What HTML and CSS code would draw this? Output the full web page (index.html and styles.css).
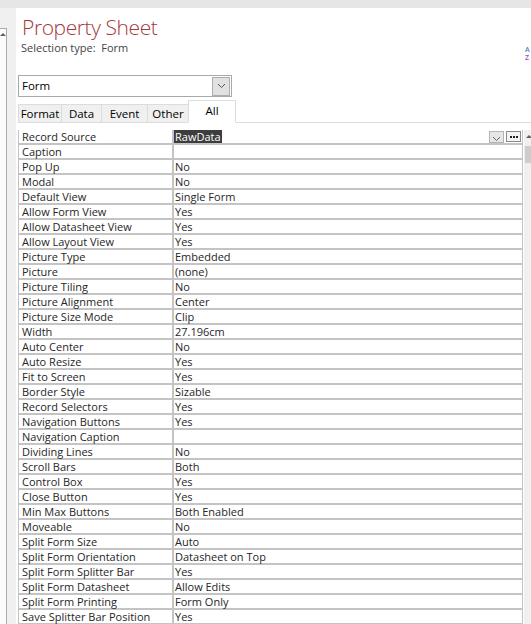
FILE: index.html
```html
<!DOCTYPE html>
<html>
<head>
<meta charset="utf-8">
<link rel="stylesheet" href="styles.css">
</head>
<body>
<div class="topband"></div>
<div class="main">
  <div class="leftstrip">
    <div class="leftbox"><span class="uparrow"></span></div>
  </div>
  <div class="panel">
    <div class="header">
      <div class="titleblock">
        <div class="title">Property Sheet</div>
        <div class="seltype">Selection type:&nbsp;&nbsp;Form</div>
      </div>
      <div class="az"><span class="az-a">A</span><span class="az-z">Z</span></div>
    </div>
    <div class="combo">
      <span class="combo-text">Form</span>
      <span class="combo-btn"><svg width="9" height="6" viewBox="0 0 9 6"><path d="M1 1 L4.5 4.5 L8 1" fill="none" stroke="#555" stroke-width="1"/></svg></span>
    </div>
    <div class="tabs">
      <div class="tab t-format">Format</div>
      <div class="tab t-data">Data</div>
      <div class="tab t-event">Event</div>
      <div class="tab t-other">Other</div>
      <div class="tab t-all active">All</div>
      <div class="tabfill"></div>
    </div>
    <div class="gridwrap">
      <div class="grid">
        <div class="row"><div class="k">Record Source</div><div class="v first"><span class="sel">RawData</span><span class="cbtn"><svg width="9" height="6" viewBox="0 0 9 6"><path d="M1 1 L4.5 4.5 L8 1" fill="none" stroke="#666" stroke-width="1"/></svg></span><span class="dbtn"><i></i><i></i><i></i></span></div></div>
        <div class="row"><div class="k">Caption</div><div class="v"></div></div>
        <div class="row"><div class="k">Pop Up</div><div class="v">No</div></div>
        <div class="row"><div class="k">Modal</div><div class="v">No</div></div>
        <div class="row"><div class="k">Default View</div><div class="v">Single Form</div></div>
        <div class="row"><div class="k">Allow Form View</div><div class="v">Yes</div></div>
        <div class="row"><div class="k">Allow Datasheet View</div><div class="v">Yes</div></div>
        <div class="row"><div class="k">Allow Layout View</div><div class="v">Yes</div></div>
        <div class="row"><div class="k">Picture Type</div><div class="v">Embedded</div></div>
        <div class="row"><div class="k">Picture</div><div class="v">(none)</div></div>
        <div class="row"><div class="k">Picture Tiling</div><div class="v">No</div></div>
        <div class="row"><div class="k">Picture Alignment</div><div class="v">Center</div></div>
        <div class="row"><div class="k">Picture Size Mode</div><div class="v">Clip</div></div>
        <div class="row"><div class="k">Width</div><div class="v">27.196cm</div></div>
        <div class="row"><div class="k">Auto Center</div><div class="v">No</div></div>
        <div class="row"><div class="k">Auto Resize</div><div class="v">Yes</div></div>
        <div class="row"><div class="k">Fit to Screen</div><div class="v">Yes</div></div>
        <div class="row"><div class="k">Border Style</div><div class="v">Sizable</div></div>
        <div class="row"><div class="k">Record Selectors</div><div class="v">Yes</div></div>
        <div class="row"><div class="k">Navigation Buttons</div><div class="v">Yes</div></div>
        <div class="row"><div class="k">Navigation Caption</div><div class="v"></div></div>
        <div class="row"><div class="k">Dividing Lines</div><div class="v">No</div></div>
        <div class="row"><div class="k">Scroll Bars</div><div class="v">Both</div></div>
        <div class="row"><div class="k">Control Box</div><div class="v">Yes</div></div>
        <div class="row"><div class="k">Close Button</div><div class="v">Yes</div></div>
        <div class="row"><div class="k">Min Max Buttons</div><div class="v">Both Enabled</div></div>
        <div class="row"><div class="k">Moveable</div><div class="v">No</div></div>
        <div class="row"><div class="k">Split Form Size</div><div class="v">Auto</div></div>
        <div class="row"><div class="k">Split Form Orientation</div><div class="v">Datasheet on Top</div></div>
        <div class="row"><div class="k">Split Form Splitter Bar</div><div class="v">Yes</div></div>
        <div class="row"><div class="k">Split Form Datasheet</div><div class="v">Allow Edits</div></div>
        <div class="row"><div class="k">Split Form Printing</div><div class="v">Form Only</div></div>
        <div class="row"><div class="k">Save Splitter Bar Position</div><div class="v">Yes</div></div>
      </div>
      <div class="scrollbar">
        <div class="sb-arrow"></div>
        <div class="sb-thumb"></div>
      </div>
    </div>
  </div>
</div>
</body>
</html>
```
FILE: styles.css
```css
html, body {
  margin: 0;
  padding: 0;
}
body {
  width: 531px;
  height: 624px;
  overflow: hidden;
  background: #ffffff;
  font-family: "Open Sans", "Noto Sans", "Liberation Sans", sans-serif;
  color: #333333;
}
.topband {
  height: 8px;
  background: #e6e6e6;
}
.main {
  display: flex;
  height: 616px;
}
.leftstrip {
  width: 16px;
  flex: none;
  background: #f0f0f0;
}
.leftbox {
  width: 6px;
  height: 596px;
  margin-top: 20px;
  background: #fbfbfb;
  border-top: 1px solid #acacac;
  border-right: 1px solid #acacac;
  display: flex;
  justify-content: center;
}
.uparrow {
  width: 0;
  height: 0;
  margin-top: 4px;
  border-left: 3px solid transparent;
  border-right: 3px solid transparent;
  border-bottom: 3px solid #606060;
}
.panel {
  flex: 1;
  min-width: 0;
  padding-left: 2px;
  overflow: hidden;
}
.header {
  display: flex;
  padding-left: 4px;
  height: 46px;
}
.titleblock {
  display: flex;
  flex-direction: column;
}
.title {
  margin-top: 7px;
  height: 24px;
  line-height: 24px;
  font-size: 21px;
  font-weight: 300;
  color: #a4373a;
  letter-spacing: -0.4px;
}
.seltype {
  margin-top: 3px;
  height: 12px;
  line-height: 12px;
  font-size: 11px;
  color: #444444;
  margin-left: -1px;
}
.az {
  margin-left: auto;
  width: 6px;
  margin-top: 38px;
  display: flex;
  flex-direction: column;
  font-size: 7px;
  line-height: 8px;
  font-weight: 600;
}
.az-a { color: #4a7fc1; }
.az-z { color: #8c57b4; }
.combo {
  margin-top: 21px;
  width: 209px;
  height: 20px;
  border: 1px solid #a9a9a9;
  display: flex;
  align-items: center;
  justify-content: space-between;
  padding-left: 3px;
  box-sizing: content-box;
}
.combo-text {
  font-size: 11.5px;
  color: #000000;
  margin-top: -1px;
}
.combo-btn {
  width: 16px;
  height: 17px;
  margin-right: 1px;
  background: #e1e1e1;
  border: 1px solid #adadad;
  display: flex;
  align-items: center;
  justify-content: center;
}
.tabs {
  margin-top: 4px;
  display: flex;
  align-items: flex-end;
  height: 22px;
}
.tab {
  height: 17px;
  line-height: 17px;
  font-size: 11.5px;
  color: #000000;
  background: #f0f0f0;
  border: 1px solid #dcdcdc;
  border-right: none;
  text-align: center;
  box-sizing: content-box;
}
.t-format { width: 42px; }
.t-data { width: 39px; }
.t-event { width: 45px; }
.t-other { width: 40px; }
.tab.active {
  width: 46px;
  height: 21px;
  line-height: 20px;
  background: #ffffff;
  border: 1px solid #dcdcdc;
  border-bottom: 1px solid #ffffff;
}
.tabfill {
  flex: 1;
  border-bottom: 1px solid #dcdcdc;
}
.gridwrap {
  margin-top: 7px;
  display: flex;
}
.grid {
  width: 503px;
  flex: none;
  border-left: 1px solid #c4c4c4;
  border-right: 1px solid #c4c4c4;
}
.row {
  display: flex;
  height: 13px;
  border-bottom: 2px solid #c4c4c4;
  font-size: 11px;
  line-height: 14px;
  white-space: nowrap;
}
.k {
  width: 150px;
  flex: none;
  padding-left: 3px;
  border-right: 2px solid #c4c4c4;
  color: #262626;
  height: 13px;
}
.v {
  flex: 1;
  min-width: 0;
  padding-left: 1px;
  color: #262626;
  display: flex;
  align-items: flex-start;
  height: 13px;
}
.v.first {
  padding-left: 0;
}
.sel {
  background: #3d3d3d;
  color: #ffffff;
  padding: 0 1px 0 1px;
  height: 13px;
  line-height: 14px;
}
.cbtn {
  margin-left: auto;
  width: 15px;
  height: 12px;
  border: 1px solid #b4b4b4;
  background: #e6e6e6;
  display: flex;
  align-items: flex-end;
  justify-content: center;
  box-sizing: border-box;
  margin-top: 1px;
}
.dbtn {
  margin-left: 2px;
  margin-right: 1px;
  margin-top: 1px;
  width: 15px;
  height: 11px;
  border: 1px solid #8a8a8a;
  background: #f4f4f4;
  box-sizing: border-box;
  display: flex;
  align-items: center;
  justify-content: center;
  gap: 1px;
}
.dbtn i {
  width: 2px;
  height: 2px;
  background: #222222;
}
.scrollbar {
  width: 8px;
  flex: none;
  margin-left: 1px;
  background: #f0f0f0;
  display: flex;
  flex-direction: column;
}
.sb-arrow {
  width: 0;
  height: 0;
  margin: 5px 0 0 2px;
  border-left: 3px solid transparent;
  border-right: 3px solid transparent;
  border-bottom: 3px solid #606060;
}
.sb-thumb {
  margin-top: 8px;
  margin-left: 1px;
  height: 17px;
  background: #cdcdcd;
}
```
